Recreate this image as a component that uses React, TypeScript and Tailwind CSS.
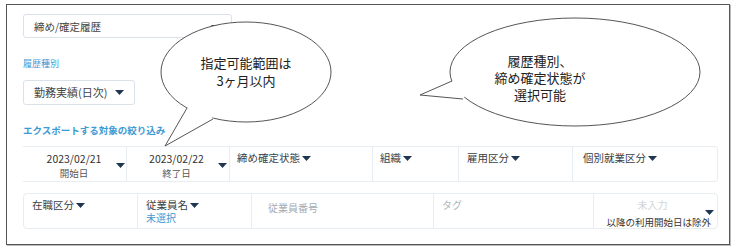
import React from "react"

const Caret = ({ className = "" }: { className?: string }) => (
  <svg width="9" height="5" viewBox="0 0 9 5" className={className}>
    <path d="M0 0 H9 L4.5 5 Z" fill="#1f3550" />
  </svg>
)

const Label = ({ children }: { children: React.ReactNode }) => (
  <div className="flex items-center gap-[2px] text-[10.5px] leading-[14px] text-[#3a3f45]">
    {children}
    <Caret />
  </div>
)

export default function App() {
  return (
    <div className="relative w-[738px] h-[252px] bg-white pt-[4px] pl-[6px] font-['Noto_Sans_CJK_JP',sans-serif]">
      {/* frame */}
      <div className="w-[724px] h-[241px] border-[1.5px] border-[#555] shadow-[1px_1px_0_#bbb] pl-[16px] pr-[11px] pt-[9px]">
        {/* 締め/確定履歴 */}
        <div className="w-[209px] h-[24px] border border-[#d9e2ea] rounded-[3px] flex items-center pl-[10px] pr-[11px] pt-[2px]">
          <span className="flex-1 text-[10.5px] text-[#444]">締め/確定履歴</span>
          <Caret />
        </div>

        <div className="mt-[20px] text-[9px] leading-[12px] text-[#3d9ad4]">履歴種別</div>

        <div className="mt-[10px] w-[112px] h-[25px] border border-[#d9e2ea] rounded-[3px] flex items-center pl-[10px] pr-[10px]">
          <span className="flex-1 text-[11px] text-[#444]">勤務実績(日次)</span>
          <Caret />
        </div>

        <div className="mt-[18px] text-[9.5px] leading-[14px] font-bold text-[#3d9ad4]">
          エクスポートする対象の絞り込み
        </div>

        {/* row 1 */}
        <div className="mt-[9px] h-[36px] flex border border-l-0 border-[#e8edf1] rounded-r-[4px]">
          <div className="w-[104px] flex items-center border-r border-[#e8edf1]">
            <div className="ml-[9px] w-[84px] text-center pt-[3px]">
              <div className="text-[10.5px] leading-[15px] text-[#333]">2023/02/21</div>
              <div className="text-[9.5px] leading-[14px] text-[#555]">開始日</div>
            </div>
            <Caret className="mt-[3px]" />
          </div>
          <div className="w-[103px] flex items-center border-r border-[#e8edf1]">
            <div className="ml-[8px] w-[83px] text-center pt-[3px]">
              <div className="text-[10.5px] leading-[15px] text-[#333]">2023/02/22</div>
              <div className="text-[9.5px] leading-[14px] text-[#555]">終了日</div>
            </div>
            <Caret className="mt-[3px]" />
          </div>
          <div className="w-[143px] pl-[7px] pt-[4px] border-r border-[#e8edf1]">
            <Label>締め確定状態</Label>
          </div>
          <div className="w-[86px] pl-[7px] pt-[4px] border-r border-[#e8edf1]">
            <Label>組織</Label>
          </div>
          <div className="w-[114px] pl-[8px] pt-[4px] border-r border-[#e8edf1]">
            <Label>雇用区分</Label>
          </div>
          <div className="flex-1 pl-[10px] pt-[4px]">
            <Label>個別就業区分</Label>
          </div>
        </div>

        {/* row 2 */}
        <div className="mt-[11px] h-[36px] flex border border-[#e8edf1] rounded-[4px]">
          <div className="w-[114px] pl-[8px] pt-[4px] border-r border-[#e8edf1]">
            <Label>在職区分</Label>
          </div>
          <div className="w-[114px] pl-[8px] pt-[4px] border-r border-[#e8edf1]">
            <Label>従業員名</Label>
            <div className="text-[10px] leading-[11px] text-[#3d9ad4]">未選択</div>
          </div>
          <div className="w-[182px] pl-[16px] pt-[7px] border-r border-[#e8edf1] text-[10px] leading-[14px] text-[#a3abb3]">
            従業員番号
          </div>
          <div className="w-[160px] pl-[8px] pt-[4px] border-r border-[#e8edf1] text-[10px] leading-[14px] text-[#b0b6bc]">
            タグ
          </div>
          <div className="relative flex-1 pt-[4px] pr-[6px]">
            <div className="text-center text-[10px] leading-[14px] text-[#d0d4d8]">未入力</div>
            <div className="mt-[4px] text-right text-[9.5px] leading-[13px] text-[#333]">以降の利用開始日は除外</div>
            <Caret className="absolute right-[3px] top-[16px]" />
          </div>
        </div>
      </div>

      {/* speech bubbles */}
      <svg className="absolute left-0 top-0 pointer-events-none" width="738" height="252">
        <ellipse cx="246" cy="72" rx="85" ry="50" fill="#fff" stroke="#555" strokeWidth="1" />
        <polygon points="187,108 165,146 213,119 205,105" fill="#fff" />
        <polyline points="187,108 165,146 213,119" fill="none" stroke="#555" strokeWidth="1" />
        <ellipse cx="575" cy="72" rx="125" ry="54" fill="#fff" stroke="#555" strokeWidth="1" />
        <polygon points="452,81 420,95 463,99 470,88" fill="#fff" />
        <polyline points="452,81 420,95 463,99" fill="none" stroke="#555" strokeWidth="1" />
      </svg>
      <div className="absolute left-[166px] top-[54px] w-[160px] text-center text-[13px] leading-[18px] text-[#222]">
        <div>指定可能範囲は</div>
        <div>3ヶ月以内</div>
      </div>
      <div className="absolute left-[460px] top-[52px] w-[160px] text-center text-[13px] leading-[17px] text-[#222]">
        <div>履歴種別、</div>
        <div>締め確定状態が</div>
        <div>選択可能</div>
      </div>
    </div>
  )
}
